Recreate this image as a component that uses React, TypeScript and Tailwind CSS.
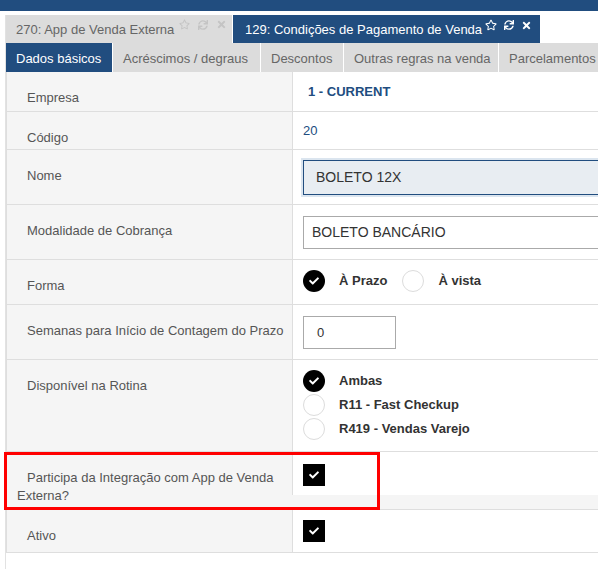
import { FaRegStar, FaSync, FaTimes, FaCheck } from "react-icons/fa";
import type { ReactNode } from "react";

const BLUE = "bg-[#214d7f]";

function Radio({ checked }: { checked?: boolean }) {
  return checked ? (
    <span className="flex size-[22px] shrink-0 items-center justify-center rounded-full bg-black">
      <FaCheck className="size-[10px] text-white" />
    </span>
  ) : (
    <span className="block size-[22px] shrink-0 rounded-full border border-[#dcdcdc] bg-white" />
  );
}

function Checkbox() {
  return (
    <span className="flex size-[22px] items-center justify-center bg-black">
      <FaCheck className="size-[10px] text-white" />
    </span>
  );
}

function Row({
  label,
  height,
  children
}: {
  label: ReactNode;
  height: string;
  children?: ReactNode;
}) {
  return (
    <div className={`grid grid-cols-[285px_1fr] border-b border-[#dedede] ${height}`}>
      <div className="bg-[#f5f5f5] pl-[10px] pr-2 pt-[17px] text-[13px] leading-[18px] text-[#555] indent-[10px]">
        {label}
      </div>
      <div className="border-l border-[#dedede] bg-white pl-[10px]">{children}</div>
    </div>
  );
}

export default function App() {
  const subTabs = [
    { label: "Dados básicos", w: "w-[106px]", active: true },
    { label: "Acréscimos / degraus", w: "w-[147px]" },
    { label: "Descontos", w: "w-[82px]" },
    { label: "Outras regras na venda", w: "w-[154px]" },
    { label: "Parcelamentos", w: "w-[110px]" }
  ];

  return (
    <div className="relative h-[569px] w-[598px] overflow-hidden bg-white font-['Liberation_Sans',Arial,sans-serif]">
      <div className={`h-[11px] ${BLUE}`} />
      <div className="ml-[5px] mt-[4px] h-full border-l border-[#e2e2e2]">
        {/* janela tabs */}
        <div className="flex h-[28px] gap-px">
          <div className="relative flex w-[226px] shrink-0 items-end whitespace-nowrap bg-[#dcdcdc] pb-[4px] pl-[10px] text-[13px] text-[#666]">
            <span>270: App de Venda Externa</span>
            <div className="absolute right-[5px] top-[4px] flex items-center gap-[8px] text-[#c4c4c4]">
              <FaRegStar className="size-[11px]" />
              <FaSync className="size-[10px]" />
              <FaTimes className="size-[11px]" />
            </div>
          </div>
          <div className={`relative flex w-[307px] shrink-0 items-end whitespace-nowrap ${BLUE} pb-[4px] pl-[12px] text-[13px] text-white`}>
            <span>129: Condições de Pagamento de Venda</span>
            <div className="absolute right-[8px] top-[4px] flex items-center gap-[7px] text-white">
              <FaRegStar className="size-[12px]" />
              <FaSync className="size-[10px]" />
              <FaTimes className="size-[11px]" />
            </div>
          </div>
        </div>

        {/* sub tabs */}
        <div className="flex h-[29px] gap-px bg-white">
          {subTabs.map((t) => (
            <div
              key={t.label}
              className={`flex shrink-0 items-center whitespace-nowrap pl-[10px] pt-[2px] text-[13px] ${t.w} ${
                t.active ? `${BLUE} text-white` : "bg-[#dcdcdc] text-[#666]"
              }`}
            >
              {t.label}
            </div>
          ))}
        </div>

        {/* form */}
        <div className="w-[700px] border-l border-[#dedede]">
          <Row label="Empresa" height="h-[40px]">
            <div className="pl-[5px] pt-[12px] text-[13px] font-bold leading-[16px] text-[#214d7f]">1 - CURRENT</div>
          </Row>
          <Row label="Código" height="h-[38px]">
            <div className="pt-[11px] text-[13px] leading-[16px] text-[#214d7f]">20</div>
          </Row>
          <Row label="Nome" height="h-[55px]">
            <div className="mt-[10px] flex h-[35px] items-center border border-[#214d7f] bg-[#e8edf2] pl-[12px] text-[14px] text-[#333] shadow-[0_0_0_2px_#dbe5ef]">
              BOLETO 12X
            </div>
          </Row>
          <Row label="Modalidade de Cobrança" height="h-[55px]">
            <div className="mt-[11px] flex h-[33px] items-center border border-[#aaa] bg-white pl-[8px] text-[14px] text-[#333]">
              BOLETO BANCÁRIO
            </div>
          </Row>
          <Row label="Forma" height="h-[45px]">
            <div className="mt-[10px] flex items-center text-[13px] font-bold text-[#333]">
              <Radio checked />
              <span className="ml-[14px]">À Prazo</span>
              <span className="ml-[15px]">
                <Radio />
              </span>
              <span className="ml-[14px]">À vista</span>
            </div>
          </Row>
          <Row label="Semanas para Início de Contagem do Prazo" height="h-[55px]">
            <div className="mt-[11px] flex h-[33px] w-[93px] items-center border border-[#aaa] bg-white pl-[13px] text-[13px] text-[#333]">
              0
            </div>
          </Row>
          <Row label="Disponível na Rotina" height="h-[92px]">
            <div className="mt-[10px] flex flex-col gap-[2px] text-[13px] font-bold text-[#333]">
              {[
                { l: "Ambas", c: true },
                { l: "R11 - Fast Checkup" },
                { l: "R419 - Vendas Varejo" }
              ].map((o) => (
                <div key={o.l} className="flex items-center">
                  <Radio checked={o.c} />
                  <span className="ml-[14px]">{o.l}</span>
                </div>
              ))}
            </div>
          </Row>
          <div className="grid h-[58px] grid-cols-[285px_1fr] border-b border-[#dedede] bg-[#f5f5f5]">
            <div className="pl-[10px] pr-2 pt-[17px] text-[13px] leading-[18px] text-[#555] indent-[10px]">
              Participa da Integração com App de Venda Externa?
            </div>
            <div className="h-[43px] border-l border-[#dedede] bg-white pl-[10px] pt-[12px]">
              <Checkbox />
            </div>
          </div>
          <Row label="Ativo" height="h-[43px]">
            <div className="pt-[10px]">
              <Checkbox />
            </div>
          </Row>
        </div>
      </div>

      {/* destaque */}
      <div className="pointer-events-none absolute left-[4px] top-[452px] h-[58px] w-[376px] border-[3px] border-[#ff0000]" />
    </div>
  );
}
